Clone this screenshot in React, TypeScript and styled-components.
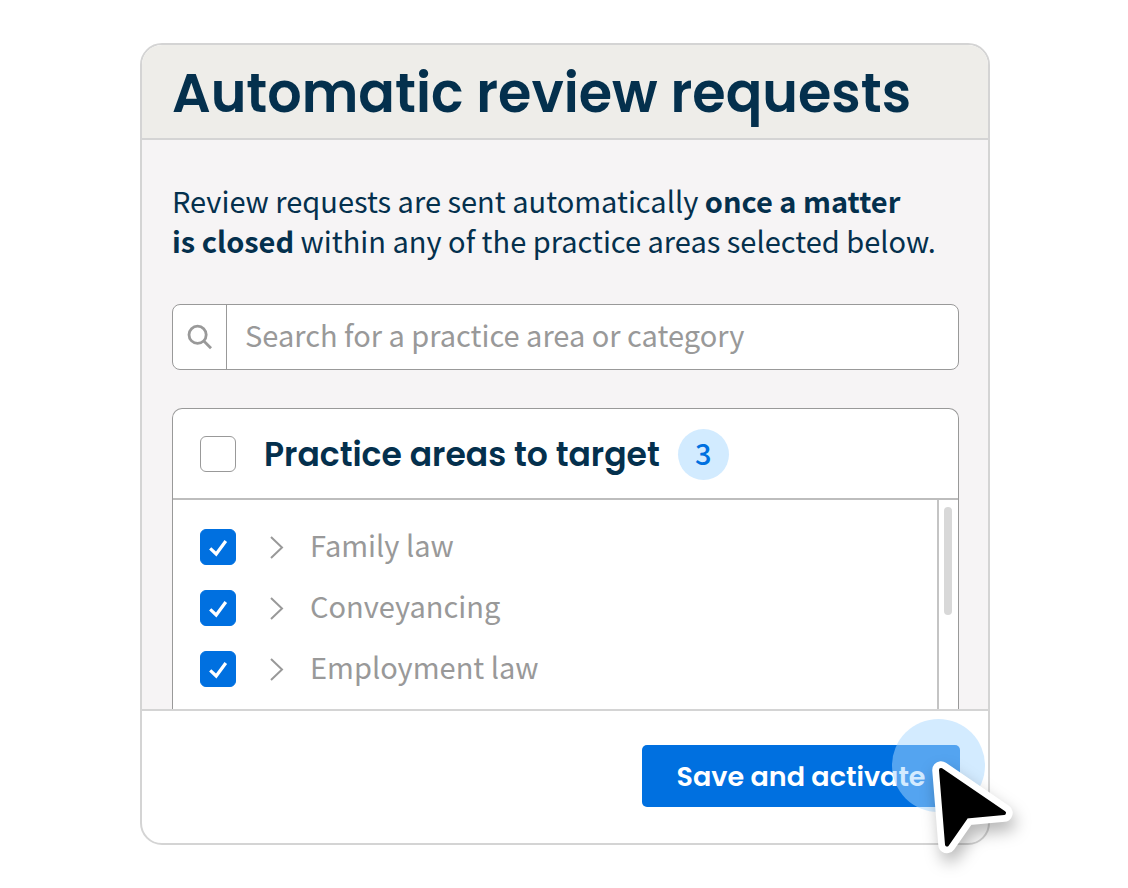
import React, { useState } from "react";
import styled, { createGlobalStyle } from "styled-components";

const colors = {
  navy: "#04304d",
  blue: "#0070e0",
  blueSoft: "#d2ebff",
  grey: "#999999",
  line: "#d4d4d4",
  header: "#eeede9",
  body: "#f6f4f5",
};

const headingFont = `Poppins, Inter, "Open Sans", sans-serif`;
const textFont = `"Source Sans Pro", "Noto Sans CJK SC", "Open Sans", sans-serif`;

const GlobalStyle = createGlobalStyle`
  * { box-sizing: border-box; }
  body { margin: 0; background: #fff; color: ${colors.navy}; font-family: ${textFont}; }
`;

const Page = styled.main`
  padding: 43px 138px 43px 140px;
`;

const Card = styled.form`
  border: 2px solid ${colors.line};
  border-radius: 22px;
  background: #fff;
`;

const CardHeader = styled.header`
  padding: 8px 30px 5px;
  border-bottom: 2px solid ${colors.line};
  border-radius: 20px 20px 0 0;
  background: ${colors.header};
`;

const Title = styled.h1`
  margin: 0;
  font: 600 54px/80px ${headingFont};
  white-space: nowrap;
`;

const CardBody = styled.div`
  padding: 40px 29px 0 30px;
  background: ${colors.body};
`;

const Intro = styled.p`
  margin: 0 0 44px;
  font-size: 29px;
  line-height: 40px;
  white-space: nowrap;
`;

const SearchBox = styled.label`
  display: flex;
  height: 66px;
  margin-bottom: 38px;
  border: 1px solid ${colors.grey};
  border-radius: 8px;
  background: #fff;
  overflow: hidden;
`;

const SearchIconCell = styled.span`
  flex: none;
  display: flex;
  align-items: center;
  justify-content: center;
  width: 54px;
  border-right: 1px solid ${colors.grey};
  color: ${colors.grey};
`;

const SearchInput = styled.input`
  flex: 1;
  min-width: 0;
  padding: 0 18px 6px;
  border: 0;
  outline: 0;
  background: transparent;
  color: ${colors.navy};
  font: 400 29px/40px ${textFont};
  &::placeholder { color: ${colors.grey}; opacity: 1; }
`;

const Panel = styled.section`
  border: 1px solid ${colors.grey};
  border-bottom: 0;
  border-radius: 10px 10px 0 0;
  background: #fff;
`;

const PanelHeader = styled.div`
  display: flex;
  align-items: center;
  height: 91px;
  padding: 0 27px;
  border-bottom: 2px solid #bdbdbd;
`;

const PanelTitle = styled.label`
  margin: 0 18px 0 28px;
  padding-top: 2px;
  font: 600 33px/48px ${headingFont};
`;

const CountBadge = styled.span`
  display: flex;
  align-items: center;
  justify-content: center;
  width: 51px;
  height: 51px;
  margin-top: 2px;
  padding-bottom: 6px;
  border-radius: 50%;
  background: ${colors.blueSoft};
  color: ${colors.blue};
  font-size: 29px;
  font-weight: 500;
  line-height: 40px;
`;

const Check = styled.span`
  display: grid;
  flex: none;
  width: 36px;
  height: 36px;
  & > * { grid-area: 1 / 1; }
  & > svg { pointer-events: none; visibility: hidden; }
  & > input:checked + svg { visibility: visible; }
`;

const CheckInput = styled.input`
  appearance: none;
  width: 36px;
  height: 36px;
  margin: 0;
  border: 1px solid ${colors.grey};
  border-radius: 6px;
  background: #fff;
  &:checked { border-color: ${colors.blue}; background: ${colors.blue}; }
`;

const ListArea = styled.div`
  display: flex;
`;

const List = styled.ul`
  flex: 1;
  margin: 0;
  padding: 16px 27px 10px;
  list-style: none;
`;

const Row = styled.li`
  display: flex;
  align-items: center;
  height: 61px;
`;

const ExpandButton = styled.button`
  display: flex;
  margin: 0 24px 0 32px;
  padding: 0;
  border: 0;
  background: none;
  color: ${colors.grey};
`;

const RowLabel = styled.label`
  padding-bottom: 6px;
  color: ${colors.grey};
  font-size: 29px;
  line-height: 40px;
`;

const ScrollTrack = styled.div`
  width: 21px;
  padding: 7px 5px;
  border-left: 2px solid #c4c4c4;
`;

const ScrollThumb = styled.div`
  width: 8px;
  height: 108px;
  border-radius: 4px;
  background: #d8d8d8;
`;

const CardFooter = styled.footer`
  display: flex;
  justify-content: flex-end;
  padding: 34px 28px 36px;
  border-top: 2px solid ${colors.line};
`;

const ButtonWrap = styled.div`
  position: relative;
`;

const SaveButton = styled.button`
  width: 318px;
  height: 62px;
  padding: 2px 0 0;
  border: 0;
  border-radius: 5px;
  background: ${colors.blue};
  color: #fff;
  font: 600 27px/40px ${headingFont};
`;

const ClickHalo = styled.span`
  position: absolute;
  top: -26px;
  right: -25px;
  width: 93px;
  height: 93px;
  border-radius: 50%;
  background: rgba(168, 216, 255, 0.5);
  pointer-events: none;
`;

const Pointer = styled.svg`
  position: absolute;
  top: 8px;
  right: -75px;
  overflow: visible;
  pointer-events: none;
  filter: drop-shadow(3px 9px 8px rgba(0, 0, 0, 0.28));
`;

type CheckboxProps = { id: string; defaultChecked?: boolean };

function Checkbox({ id, defaultChecked = false }: CheckboxProps) {
  const [checked, setChecked] = useState(defaultChecked);
  return (
    <Check>
      <CheckInput id={id} type="checkbox" checked={checked} onChange={(e) => setChecked(e.target.checked)} />
      <svg width="36" height="36" viewBox="0 0 36 36" fill="none" aria-hidden="true">
        <path d="M10.2 19.4 16.2 25 25.8 12" stroke="#fff" strokeWidth="3.2" />
      </svg>
    </Check>
  );
}

const areas = [
  { id: "family", name: "Family law" },
  { id: "conveyancing", name: "Conveyancing" },
  { id: "employment", name: "Employment law" },
];

export default function App() {
  return (
    <>
      <GlobalStyle />
      <Page>
        <Card onSubmit={(e) => e.preventDefault()}>
          <CardHeader>
            <Title>Automatic review requests</Title>
          </CardHeader>
          <CardBody>
            <Intro>
              Review requests are sent automatically <b>once a matter<br />is closed</b> within any of the practice
              areas selected below.
            </Intro>
            <SearchBox>
              <SearchIconCell>
                <svg width="26" height="26" viewBox="0 0 26 26" fill="none" stroke="currentColor" strokeWidth="2.8" aria-hidden="true">
                  <circle cx="10.6" cy="10.8" r="8.6" />
                  <path d="M16.8 17 24 24.2" />
                </svg>
              </SearchIconCell>
              <SearchInput
                type="search"
                aria-label="Search for a practice area or category"
                placeholder="Search for a practice area or category"
              />
            </SearchBox>
            <Panel>
              <PanelHeader>
                <Checkbox id="all-areas" />
                <PanelTitle htmlFor="all-areas">Practice areas to target</PanelTitle>
                <CountBadge>3</CountBadge>
              </PanelHeader>
              <ListArea>
                <List>
                  {areas.map((area) => (
                    <Row key={area.id}>
                      <Checkbox id={area.id} defaultChecked />
                      <ExpandButton type="button" aria-label={`Expand ${area.name}`}>
                        <svg width="18" height="24" viewBox="0 0 18 24" fill="none" stroke="currentColor" strokeWidth="2" aria-hidden="true">
                          <path d="M3 2 14 12.5 3 23" />
                        </svg>
                      </ExpandButton>
                      <RowLabel htmlFor={area.id}>{area.name}</RowLabel>
                    </Row>
                  ))}
                </List>
                <ScrollTrack>
                  <ScrollThumb />
                </ScrollTrack>
              </ListArea>
            </Panel>
          </CardBody>
          <CardFooter>
            <ButtonWrap>
              <SaveButton type="submit">Save and activate</SaveButton>
              <ClickHalo />
              <Pointer width="110" height="110" viewBox="0 0 110 110" strokeLinejoin="round" aria-hidden="true">
                <path d="M16 17 79 60 41.5 63.5 22 91.5Z" fill="#fff" stroke="#fff" strokeWidth="17.5" />
                <path d="M16 17 79 60 41.5 63.5 22 91.5Z" fill="#000" stroke="#000" strokeWidth="4" />
              </Pointer>
            </ButtonWrap>
          </CardFooter>
        </Card>
      </Page>
    </>
  );
}
